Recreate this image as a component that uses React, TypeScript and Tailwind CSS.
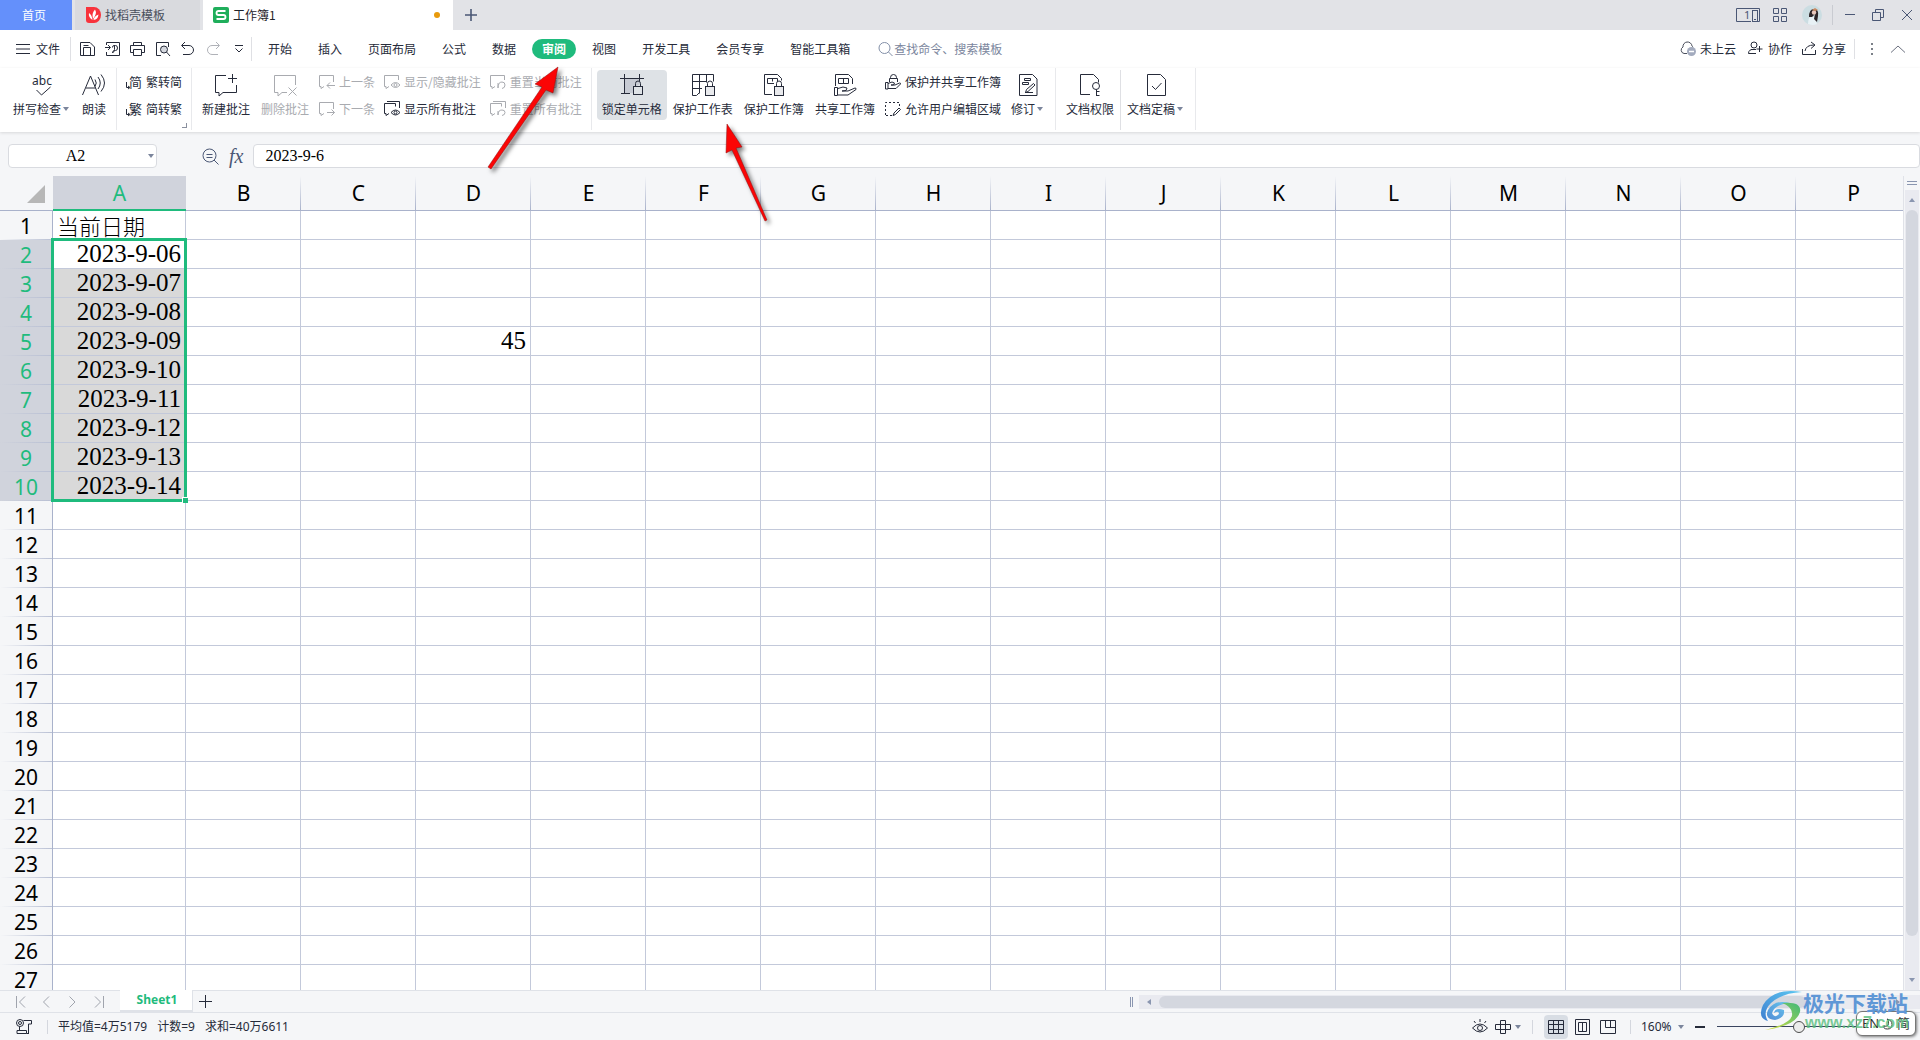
import type { ReactNode } from 'react';

// Small wrapper so that every line icon shares stroke settings
function Icon({ w = 16, h = 16, className = '', children }: { w?: number; h?: number; className?: string; children: ReactNode }) {
  return (
    <svg
      width={w}
      height={h}
      viewBox={`0 0 ${w} ${h}`}
      fill="none"
      stroke="currentColor"
      strokeWidth="1"
      className={`shrink-0 overflow-visible ${className}`}
      aria-hidden="true"
    >
      {children}
    </svg>
  );
}

function Caret() {
  return (
    <svg width="6" height="4" viewBox="0 0 6 4" className="shrink-0 text-[#7b859c]" fill="currentColor" aria-hidden="true">
      <path d="M0 0h6L3 4z" />
    </svg>
  );
}

const icons = {
  spell: (
    <Icon w={24} h={24}>
      <text x="12" y="12" textAnchor="middle" fontSize="12" stroke="none" fill="currentColor" fontFamily="Noto Sans">abc</text>
      <path d="M6.500 17l5 5 9-8" />
    </Icon>
  ),
  read: (
    <Icon w={24} h={24}>
      <path d="M.5 22L8.500 3l8 19M4 15h9.500M13 6.500q2.500 3.500 0 7M16 4q4.500 6 0 12M19 1.500q7 8.500 0 17" />
    </Icon>
  ),
  newNote: (
    <Icon w={24} h={24}>
      <path d="M12 2.500H1.500v17H5v3.500l4-3.500h13.500V12M18.500 1v9M14 5.500h9" />
    </Icon>
  ),
  delNote: (
    <Icon w={24} h={24}>
      <path d="M14 19.500H9L5 23v-3.500H1.500v-17h21V12M15.500 14.500l8 8M23.500 14.500l-8 8" />
    </Icon>
  ),
  lockCell: (
    <Icon w={24} h={24}>
      <path d="M4 6h16v5l-7 4v5H4z" fill="#c7cbd4" stroke="none" />
      <path d="M0 5.500h24M4.500 1v20M19.500 1v7M1 20.500h9" />
      <rect x="13.500" y="13.500" width="9" height="8" fill="#dee2e6" />
      <path d="M15.500 13.500v-3a2.500 2.500 0 015 0v3" />
    </Icon>
  ),
  protectSheet: (
    <Icon w={24} h={24}>
      <path d="M1.500 1.500h21v7M8.500 1.500v19M15.500 1.500v8M1.500 1.500v21h4l3-3M1.500 8.500h14M1.500 15.500H11" />
      <rect x="14.500" y="13.500" width="9" height="9" fill="#e9eaed" />
      <path d="M16.500 13.500v-3a2.500 2.500 0 015 0v3" />
    </Icon>
  ),
  protectBook: (
    <Icon w={24} h={24}>
      <path d="M10 21.500H2.500v-20h13l4 4v2M12 10.500H5.500v-5h10v3M10.500 5.500v3" />
      <rect x="12.500" y="13.500" width="9" height="9" fill="#e9eaed" />
      <path d="M14.500 13.500v-3a2.500 2.500 0 015 0v3" />
    </Icon>
  ),
  shareBook: (
    <Icon w={24} h={24}>
      <path d="M2.500 13V1.500h13l4 4V11M5.500 5.500h10v5h-10zM10.500 5.500v5" />
      <path d="M1.500 14.500h3v8h-3zM5 15.500l5-1.500 4 1-1 2.500-4 .5h6l7-3q1.500 0 1 1.500l-8 5.500H5" />
    </Icon>
  ),
  revise: (
    <Icon w={24} h={24}>
      <path d="M3.500 1.500h13l4.500 4.500v16.500H3.500zM8.500 5.500h6v2h-6zM6.500 9.500h6v2h-6zM9.500 19.500l1-3 7-6 1.500 1.500-7 6.500zM9 19.500h8" />
    </Icon>
  ),
  permission: (
    <Icon w={24} h={24}>
      <path d="M12 21.500H2.500v-20h13l5 5v3" />
      <circle cx="18" cy="13" r="3.500" />
      <path d="M18.500 16.500V23M18.500 18.500h3M18.500 22.500h3" />
    </Icon>
  ),
  finalize: (
    <Icon w={24} h={24}>
      <path d="M3.500 1.500h13l5 5v16h-18zM8 13l3.500 3.500L17.500 10" />
    </Icon>
  ),
  toSimple: (
    <Icon>
      <text x="16" y="13" textAnchor="end" fontSize="13" stroke="none" fill="currentColor" fontFamily="Noto Sans CJK SC">简</text>
      <path d="M.5 8v5.500H3M2 12l2 1.500L2 15" />
    </Icon>
  ),
  toTrad: (
    <Icon>
      <text x="16" y="13" textAnchor="end" fontSize="13" stroke="none" fill="currentColor" fontFamily="Noto Sans CJK SC">繁</text>
      <path d="M.5 8v5.500H3M2 12l2 1.500L2 15" />
    </Icon>
  ),
  prev: (
    <Icon>
      <path d="M5 12.500l-3 2v-2H.500v-11h14V8M16 11.500H8M11 8.500l-3 3 3 3" />
    </Icon>
  ),
  next: (
    <Icon>
      <path d="M5 12.500l-3 2v-2H.500v-11h14V8M8 11.500h7.500M12.500 8.500l3 3-3 3" />
    </Icon>
  ),
  showHide: (
    <Icon>
      <path d="M5 12.500l-3 2v-2H.500v-11h14V6" />
      <path d="M7 11q4.500-5 9 0q-4.500 5-9 0z" />
      <circle cx="11.500" cy="11" r="1.500" />
    </Icon>
  ),
  showAll: (
    <Icon>
      <path d="M5 12.500l-3 2v-2H.500v-10h11v3M3 .5h12.500V7" />
      <path d="M7 11.500q4.500-5 9 0q-4.500 5-9 0z" />
      <circle cx="11.500" cy="11.500" r="1.500" />
    </Icon>
  ),
  resetOne: (
    <Icon>
      <path d="M5 12.500l-3 2v-2H.500v-11h14V6M8 9v5M8 14q0-6 4-6 3 0 3 3t-3 3.500" />
    </Icon>
  ),
  resetAll: (
    <Icon>
      <path d="M5 12.500l-3 2v-2H.500v-10h11v3M3 .5h12.500V7M8 10v4M8 14q0-5 4-5 3 0 3 2.500t-3 3" />
    </Icon>
  ),
  protectShare: (
    <Icon>
      <path d="M5.500 4.500V3.500a3 3 0 016 0v1M4.500 8V4.500h8V8M.5 8.500H3v6.500H.5zM3 9.500l4-1.500 2.500 1-1 2H6h4l4.500-2q1.500 0 1 1L11 14.500H3" />
    </Icon>
  ),
  allowEdit: (
    <Icon>
      <path d="M.5 14V1.500h14V7M1 14.500h7" strokeDasharray="2 2" />
      <path d="M8 14.500l1-2.500 5-5 1.500 1.500-5 5z" />
    </Icon>
  ),
};

const tabs = ['开始', '插入', '页面布局', '公式', '数据', '审阅', '视图', '开发工具', '会员专享', '智能工具箱'];
const columns = ['A', 'B', 'C', 'D', 'E', 'F', 'G', 'H', 'I', 'J', 'K', 'L', 'M', 'N', 'O', 'P'];
const rows = Array.from({ length: 27 }, (_, i) => i + 1);

const cells: Record<string, string> = {
  A1: '当前日期',
  A2: '2023-9-06',
  A3: '2023-9-07',
  A4: '2023-9-08',
  A5: '2023-9-09',
  A6: '2023-9-10',
  A7: '2023-9-11',
  A8: '2023-9-12',
  A9: '2023-9-13',
  A10: '2023-9-14',
  D5: '45',
};

function BigButton({ icon, label, active, disabled, menu }: { icon: ReactNode; label: string; active?: boolean; disabled?: boolean; menu?: boolean }) {
  return (
    <button
      type="button"
      disabled={disabled}
      className={`flex h-[50px] shrink-0 flex-col items-center gap-1 rounded-sm px-[5px] pt-[3px] disabled:text-[#a9abb0] ${active ? 'bg-[#dee2e6]' : ''}`}
    >
      {icon}
      <span className="flex items-center leading-4">
        {label}
        {menu && (
          <span className="flex w-2.5 justify-center">
            <Caret />
          </span>
        )}
      </span>
    </button>
  );
}

function SmallButton({ icon, label, disabled }: { icon: ReactNode; label: string; disabled?: boolean }) {
  return (
    <button type="button" disabled={disabled} className="flex h-6 items-center gap-1 px-1 whitespace-nowrap disabled:text-[#a9abb0]">
      {icon}
      {label}
    </button>
  );
}

function Group({ children, className = '' }: { children: ReactNode; className?: string }) {
  return <div className={`relative flex shrink-0 gap-px border-r border-[#e8e9ec] px-[5px] pt-0.5 ${className}`}>{children}</div>;
}

function Stack({ children }: { children: ReactNode }) {
  return <div className="flex flex-col gap-[3px]">{children}</div>;
}

function TitleBar() {
  return (
    <header className="flex h-[30px] shrink-0 items-stretch bg-[#e2e3e7]">
      <button type="button" className="w-[72px] bg-[#6490fb] pr-1 text-white">首页</button>
      <button type="button" className="ml-[3px] flex w-[125px] items-center gap-1 bg-[#d9dade] pl-[11px] text-[#4a4f5c]">
        <svg width="15" height="16" viewBox="0 0 15 16" aria-hidden="true">
          <path d="M0 0h8a7 8 0 010 16H3a3 3 0 01-3-3z" fill="#f8333c" />
          <path d="M6.500 13Q2 10 3 6q3 2 3.500 7zM7 12Q5.500 6 9 2.500q2.500 4-2 9.500zM7.500 13q.5-4 5-5.500-.5 5-5 5.500z" fill="#fff" />
        </svg>
        找稻壳模板
      </button>
      <button type="button" className="ml-[3px] flex w-[250px] items-center gap-1 bg-white pr-[13px] pl-[10px] text-[#1f2329]">
        <svg width="16" height="16" viewBox="0 0 16 16" aria-hidden="true">
          <rect width="16" height="16" rx="2" fill="#1fae5b" />
          <path d="M12.500 4H5.500q-2 0-2 2t2 2h5q2 0 2 2t-2 2h-7" fill="none" stroke="#fff" strokeWidth="1.800" />
        </svg>
        工作簿1
        <span className="ml-auto size-1.5 rounded-full bg-[#e89a0c]" />
      </button>
      <button type="button" aria-label="新建" className="flex w-9 items-center justify-center text-[#4a5775]">
        <Icon w={12} h={12}><path d="M6 0v12M0 6h12" strokeWidth="1.600" /></Icon>
      </button>
      <div className="ml-auto flex items-center pr-2 text-[#4a5775]">
        <button type="button" aria-label="窗口">
          <Icon w={24} h={14}>
            <path d="M15 13.500H.5V.5h23v13H20" />
            <rect x="16.500" y="2.500" width="5" height="11" />
            <text x="8" y="11" fontSize="11" stroke="none" fill="currentColor" fontFamily="Noto Sans">1</text>
            <path d="M18 11.500h2" />
          </Icon>
        </button>
        <button type="button" aria-label="应用" className="ml-[13px]">
          <Icon w={14} h={14}><path d="M.5.5h5v5h-5zM8.500.5h5v5h-5zM.5 8.500h5v5h-5zM8.500 8.500h5v5h-5z" /></Icon>
        </button>
        <button type="button" aria-label="账号" className="ml-[15px]">
          <svg width="20" height="20" viewBox="0 0 20 20" aria-hidden="true">
            <circle cx="10" cy="10" r="10" fill="#cbdde2" />
            <path d="M6 19q0-6 3-8l4 1 2 7q-4 2-9 0z" fill="#e8f1f5" />
            <path d="M7 12q0-8 5-8 5 0 4 7l-1 6-3-3 1-5-3 3z" fill="#2c2427" />
            <circle cx="12" cy="7.500" r="2.200" fill="#e9c8bd" />
            <path d="M10 5l3-2 3 2-3 1z" fill="#c88a62" />
          </svg>
        </button>
        <span className="ml-2.5 h-5 w-px bg-[#c9cbd1]" />
        <button type="button" aria-label="最小化" className="ml-3">
          <Icon w={10} h={12}><path d="M0 5.500h10" /></Icon>
        </button>
        <button type="button" aria-label="还原" className="ml-[17px]">
          <Icon w={12} h={12}><path d="M.5 3.500h8v8h-8zM3.500 3.500v-3h8v8h-3" /></Icon>
        </button>
        <button type="button" aria-label="关闭" className="ml-[18px]">
          <Icon w={10} h={10}><path d="M0 0l10 10M10 0L0 10" /></Icon>
        </button>
      </div>
    </header>
  );
}

function MenuBar() {
  return (
    <div className="flex h-[38px] shrink-0 items-center bg-white">
      <button type="button" className="ml-4 flex items-center gap-1.5">
        <Icon w={14} h={10}><path d="M0 .5h14M0 5h14M0 9.500h14" /></Icon>
        文件
      </button>
      <span className="ml-2.5 h-6 w-px bg-[#dfe0e4]" />
      <div className="ml-[9px] flex items-center gap-[9px]">
        <button type="button" aria-label="保存">
          <Icon><path d="M.5 1.500h9.500l4.500 4.500V14.500H.500zM3.500 14V6.500h7V14M3.500 4.500h5" /></Icon>
        </button>
        <button type="button" aria-label="输出为PDF">
          <Icon><path d="M1.500 4V1.500h13v13h-13V11M0 6.500h5M3 4l2.500 2.500L3 9M7.500 12q0-2.500 2-2.500h1q2 0 2-2.500t-2-2.500H9q-1.500 0-1.500 2M9.500 4.500v4q0 3-2 3" /></Icon>
        </button>
        <button type="button" aria-label="打印">
          <Icon><path d="M3.500 4.500v-3h8v3M3 11.500H.5v-7h14v7H12M3.500 8.500h8v6h-8z" /></Icon>
        </button>
        <button type="button" aria-label="打印预览">
          <Icon>
            <path d="M6 14.500H1.500v-13h12V6" />
            <circle cx="9" cy="8.500" r="3.500" fill="#d5d8df" />
            <path d="M11.500 11l3.500 4" />
          </Icon>
        </button>
        <button type="button" aria-label="撤销">
          <Icon><path d="M5 1L1.500 4.500 5 8M2 4.500h7a4.500 4.500 0 010 9H3" /></Icon>
        </button>
        <button type="button" aria-label="恢复" disabled className="text-[#b0b2b8]">
          <Icon><path d="M11 1l3.500 3.500L11 8M14 4.500H7a4.500 4.500 0 000 9h6" /></Icon>
        </button>
        <button type="button" aria-label="更多" className="ml-1">
          <Icon w={10} h={8}><path d="M1 .5h8M1.500 3.500L5 7l3.500-3.500" /></Icon>
        </button>
      </div>
      <span className="ml-[7px] h-6 w-px bg-[#dfe0e4]" />
      <nav className="ml-1.5 flex items-center gap-1.5">
        {tabs.map(tab => (
          <button
            key={tab}
            type="button"
            className={`h-5 rounded-full px-2.5 whitespace-nowrap ${tab === '审阅' ? 'bg-[#1fbb7d] font-bold text-white' : ''}`}
          >
            {tab}
          </button>
        ))}
      </nav>
      <label className="ml-[18px] flex items-center text-[#8390a8]">
        <Icon><circle cx="6.500" cy="7" r="5.500" /><path d="M10.500 11l4 4" /></Icon>
        <input aria-label="搜索" placeholder="查找命令、搜索模板" className="w-32 placeholder:text-[#7b869d] outline-none" />
      </label>
      <div className="ml-auto flex items-center pr-[15px]">
        <button type="button" className="flex items-center gap-1">
          <Icon>
            <path d="M7 12.500H4A3.500 3.500 0 013 6a4.500 4.500 0 019-1 3 3 0 011 1.500" stroke="#4a4f5c" />
            <circle cx="11.500" cy="10.500" r="4.500" fill="#a3abbe" stroke="none" />
            <path d="M9 10.500h5" stroke="#fff" strokeWidth="1.500" />
          </Icon>
          未上云
        </button>
        <button type="button" className="ml-3 flex items-center gap-1">
          <Icon><circle cx="6" cy="4" r="3" /><path d="M8 12.500H.5Q.5 8 6 8.500M3 8.500h5M11.500 5v6M8.500 8h6" /></Icon>
          协作
        </button>
        <button type="button" className="ml-[10px] flex items-center gap-1">
          <Icon><path d="M.5 8v5.500h13V9M3 10q1-6 9-6M9 1l4 3-4 3.500" /></Icon>
          分享
        </button>
        <span className="ml-2 h-5 w-px bg-[#dfe0e4]" />
        <button type="button" aria-label="更多选项" className="ml-4">
          <svg width="3" height="12" viewBox="0 0 3 12" fill="#7b8088" aria-hidden="true"><path d="M0 0h2v2H0zM0 5h2v2H0zM0 10h2v2H0z" /></svg>
        </button>
        <button type="button" aria-label="折叠功能区" className="ml-[17px] text-[#6c7180]">
          <Icon w={14} h={8}><path d="M0 7.500L7 1l7 6.500" /></Icon>
        </button>
      </div>
    </div>
  );
}

function Ribbon() {
  return (
    <div className="relative z-10 flex h-16 shrink-0 bg-white pb-0.5 shadow-[0_1px_3px_rgba(0,0,0,0.12)]">
      <Group className="pl-2">
        <BigButton icon={icons.spell} label="拼写检查" menu />
        <BigButton icon={icons.read} label="朗读" />
      </Group>
      <Group>
        <Stack>
          <SmallButton icon={icons.toSimple} label="繁转简" />
          <SmallButton icon={icons.toTrad} label="简转繁" />
        </Stack>
        <span className="absolute right-1 bottom-0.5 size-[5px] border-r border-b border-[#8a909e]" />
      </Group>
      <Group>
        <BigButton icon={icons.newNote} label="新建批注" />
        <BigButton icon={icons.delNote} label="删除批注" disabled />
        <Stack>
          <SmallButton icon={icons.prev} label="上一条" disabled />
          <SmallButton icon={icons.next} label="下一条" disabled />
        </Stack>
        <Stack>
          <SmallButton icon={icons.showHide} label="显示/隐藏批注" disabled />
          <SmallButton icon={icons.showAll} label="显示所有批注" />
        </Stack>
        <Stack>
          <SmallButton icon={icons.resetOne} label="重置当前批注" disabled />
          <SmallButton icon={icons.resetAll} label="重置所有批注" disabled />
        </Stack>
      </Group>
      <Group>
        <BigButton icon={icons.lockCell} label="锁定单元格" active />
        <BigButton icon={icons.protectSheet} label="保护工作表" />
        <BigButton icon={icons.protectBook} label="保护工作簿" />
        <BigButton icon={icons.shareBook} label="共享工作簿" />
        <Stack>
          <SmallButton icon={icons.protectShare} label="保护并共享工作簿" />
          <SmallButton icon={icons.allowEdit} label="允许用户编辑区域" />
        </Stack>
        <BigButton icon={icons.revise} label="修订" menu />
      </Group>
      <Group>
        <BigButton icon={icons.permission} label="文档权限" />
        <span className="w-px bg-[#dfe0e4]" />
        <BigButton icon={icons.finalize} label="文档定稿" menu />
      </Group>
    </div>
  );
}

function FormulaBar() {
  return (
    <div className="flex h-11 shrink-0 items-center bg-[#f5f6f8] pt-1 pl-2">
      <div className="flex h-6 w-[149px] items-center rounded-sm border border-[#d9dbe0] bg-white pr-0.5">
        <input aria-label="名称框" defaultValue="A2" className="min-w-0 flex-1 pr-1.5 text-center font-['Liberation_Serif',serif] text-base leading-5 text-black outline-none" />
        <Caret />
      </div>
      <div className="ml-[45px] flex items-center gap-2.5 text-[#4a5775]">
        <button type="button" aria-label="查找">
          <Icon w={17} h={17}><circle cx="7.500" cy="7.500" r="6.500" /><path d="M12 12l4.500 4.500M4.500 6.500h6M4.500 9.500h6" /></Icon>
        </button>
        <button type="button" className="font-['Liberation_Serif',serif] text-xl leading-5 italic">fx</button>
      </div>
      <input
        aria-label="编辑栏"
        defaultValue="2023-9-6"
        className="ml-2.5 h-6 min-w-0 flex-1 rounded-sm border border-[#d9dbe0] bg-white px-[11px] font-['Liberation_Serif',serif] text-base leading-5 text-black outline-none"
      />
    </div>
  );
}

function Sheet() {
  return (
    <div className="flex min-h-0 flex-1 bg-[#f5f6f8]">
      <div className="min-w-0 flex-1 overflow-hidden border-r border-[#e0e2e8]">
        <table className="w-full table-fixed border-separate border-spacing-0 bg-white">
          <colgroup>
            <col className="w-[53px]" />
            {columns.map(c => (
              <col key={c} className={c === 'A' ? 'w-[133px]' : 'w-[115px]'} />
            ))}
          </colgroup>
          <thead>
            <tr className="h-[35px]">
              <th className="border-b border-[#a9b2cb] bg-[#f5f6f8] p-0">
                <svg width="18" height="18" viewBox="0 0 18 18" className="mt-px ml-[27px]" aria-hidden="true"><path d="M18 0v18H0z" fill="#b7b7b7" /></svg>
              </th>
              {columns.map(c => (
                <th
                  key={c}
                  scope="col"
                  className={`p-0 font-['Noto_Sans',sans-serif] text-[21px] leading-8 font-normal ${
                    c === 'A'
                      ? 'border-b-2 border-[#1fbb7d] bg-[#d0d3dc] text-[#1fbb7d]'
                      : 'border-b border-[#a9b2cb] bg-[#f5f6f8] bg-linear-to-b from-transparent to-[#a9b2cb] bg-[length:1px_100%] bg-right bg-no-repeat text-black'
                  }`}
                >
                  {c}
                </th>
              ))}
            </tr>
          </thead>
          <tbody>
            {rows.map(r => {
              const selectedRow = r >= 2 && r <= 10;
              return (
                <tr key={r} className="h-[29px]">
                  <th
                    scope="row"
                    className={`border-r border-[#a9b2cb] bg-linear-to-r from-transparent to-[#b9c0d4] bg-[length:100%_1px] bg-bottom bg-no-repeat p-0 font-['Noto_Sans',sans-serif] text-[21px] leading-7 font-normal ${
                      selectedRow ? 'bg-[#d0d3dc] text-[#1fbb7d]' : 'bg-[#f5f6f8] text-black'
                    }`}
                  >
                    {r}
                  </th>
                  {columns.map(c => {
                    const id = `${c}${r}`;
                    const shaded = c === 'A' && r > 2 && r <= 10;
                    return (
                      <td
                        key={id}
                        className={`relative border-r border-b border-[#c3c9da] px-1 py-0 whitespace-nowrap text-black ${shaded ? 'bg-[#d9d9d9]' : ''} ${
                          id === 'A1'
                            ? "text-left font-['Noto_Sans_CJK_SC',sans-serif] text-[22px] leading-7 font-light"
                            : "text-right font-['Liberation_Serif',serif] text-[25px] leading-7"
                        }`}
                      >
                        {cells[id]}
                        {id === 'A2' && (
                          <span className="pointer-events-none absolute -top-0.5 -left-0.5 z-10 h-[264px] w-[136px] border-3 border-[#1fbb7d]">
                            <span className="absolute -right-1 -bottom-1 size-1.5 border-t border-l border-white bg-[#1fbb7d]" />
                          </span>
                        )}
                      </td>
                    );
                  })}
                </tr>
              );
            })}
          </tbody>
        </table>
      </div>
      <div className="flex w-4 flex-col items-center text-[#8a96b0]">
        <div className="my-[5px] h-1 w-2.5 border-y border-current" />
        <div className="flex min-h-0 w-3.5 flex-1 flex-col items-center bg-[#e9eaf0]">
          <svg width="6" height="4" viewBox="0 0 6 4" className="my-2 shrink-0" fill="currentColor" aria-hidden="true"><path d="M3 0l3 4H0z" /></svg>
          <div className="mb-[42px] w-3 flex-1 rounded-full bg-[#d4d7df]" />
          <svg width="6" height="4" viewBox="0 0 6 4" className="mb-2 shrink-0" fill="currentColor" aria-hidden="true"><path d="M0 0h6L3 4z" /></svg>
        </div>
      </div>
    </div>
  );
}

function SheetTabs() {
  return (
    <div className="flex h-[22px] shrink-0 items-stretch border-t border-[#dfe2e8] bg-[#f5f6f8]">
      <div className="flex w-[120px] items-center gap-4 pl-4 text-[#a0a4ad]">
        <button type="button" aria-label="第一张"><Icon w={10} h={12}><path d="M.5 0v12M9 .5L3.500 6 9 11.500" /></Icon></button>
        <button type="button" aria-label="上一张"><Icon w={10} h={12}><path d="M7 .5L1.500 6 7 11.500" /></Icon></button>
        <button type="button" aria-label="下一张"><Icon w={10} h={12}><path d="M1.500.5L7 6l-5.500 5.500" /></Icon></button>
        <button type="button" aria-label="最后一张"><Icon w={10} h={12}><path d="M1 .5L6.500 6 1 11.500M9.500 0v12" /></Icon></button>
      </div>
      <button type="button" className="-mt-px w-[73px] border-r border-b-2 border-[#dfe2e8] bg-white pl-0.5 font-['Noto_Sans',sans-serif] font-bold text-[#1fbb7d]">Sheet1</button>
      <button type="button" aria-label="新建工作表" className="flex w-6 items-center justify-center"><Icon w={13} h={13}><path d="M6.500 0v13M0 6.500h13" /></Icon></button>
      <div className="ml-auto flex w-[41%] items-center text-[#8a96b0]">
        <div className="ml-[-3px] h-2.5 w-[3px] border-x border-current" />
        <div className="ml-1.5 flex h-3.5 flex-1 items-center bg-[#e9eaf0] pr-5 pl-2">
          <svg width="4" height="6" viewBox="0 0 4 6" className="shrink-0" fill="currentColor" aria-hidden="true"><path d="M4 0v6L0 3z" /></svg>
          <div className="mr-[90px] ml-2 h-3 flex-1 rounded-full bg-[#d4d7df]" />
          <svg width="4" height="6" viewBox="0 0 4 6" className="shrink-0" fill="currentColor" aria-hidden="true"><path d="M0 0v6l4-3z" /></svg>
        </div>
      </div>
    </div>
  );
}

function StatusBar() {
  return (
    <footer className="flex h-7 shrink-0 items-center border-t border-[#dfe2e8] bg-[#f5f6f8] font-['Noto_Sans','Noto_Sans_CJK_SC',sans-serif]">
      <button type="button" aria-label="宏" className="ml-4">
        <Icon><circle cx="4" cy="4" r="3.500" /><circle cx="4" cy="4" r="1.500" /><path d="M7.500 1.500h8V5h-3v10M3.500 7.500v4M1 11.500h9.500v3H1zM10.500 14.500h2" /></Icon>
      </button>
      <span className="ml-[15px] h-3.5 w-px bg-[#d4d7de]" />
      <div className="ml-2.5 flex gap-2.5">
        <span>平均值=4万5179</span>
        <span>计数=9</span>
        <span>求和=40万6611</span>
      </div>
      <div className="ml-auto flex items-center">
        <button type="button" aria-label="护眼模式">
          <Icon>
            <path d="M.5 9q7.500-8 15 0-7.500 8-15 0z" />
            <circle cx="8" cy="9" r="2.500" />
            <path d="M8 0v3M2 2l1.500 2M14 2l-1.500 2" />
          </Icon>
        </button>
        <button type="button" aria-label="阅读模式" className="ml-[7px] flex items-center gap-1">
          <Icon><path d="M5.500 1.500h5v13h-5zM.5 5.500h15v5H.5zM5.500 5.500v5M10.500 5.500v5" /></Icon>
          <Caret />
        </button>
        <span className="mx-[11px] h-3.5 w-px bg-[#d4d7de]" />
        <div className="flex items-center gap-[7px]">
          <button type="button" aria-label="普通视图" className="flex h-6 w-6 items-center justify-center rounded-sm bg-[#d8dde4]">
            <Icon><path d="M.5 1.500h15v13H.5zM.5 5.500h15M.5 10.500h15M5.500 1.500v13M10.500 1.500v13" /></Icon>
          </button>
          <button type="button" aria-label="页面布局视图">
            <Icon><path d="M.5.5h14v15H.5zM3.500 3.500h8v9h-8zM7.500 3.500v9" /></Icon>
          </button>
          <button type="button" aria-label="分页预览" className="ml-0.5">
            <Icon><path d="M.5 1.500h15v13H.5zM5.500 1.500v7h10M10.500 1.500v7" /></Icon>
          </button>
        </div>
        <span className="ml-3.5 h-3.5 w-px bg-[#d4d7de]" />
        <label className="ml-2.5 flex items-center">
          <select aria-label="缩放比例" className="w-[37px] appearance-none bg-transparent outline-none">
            <option>160%</option>
          </select>
          <Caret />
        </label>
        <button type="button" aria-label="缩小" className="ml-[11px]"><Icon w={10} h={10}><path d="M0 5h10" strokeWidth="2" /></Icon></button>
        <input
          type="range"
          aria-label="缩放"
          min="0"
          max="100"
          defaultValue="50"
          className="ml-3 h-3 w-[164px] appearance-none bg-[linear-gradient(#3a4560,#3a4560)] bg-[length:100%_1px] bg-center bg-no-repeat [&::-webkit-slider-thumb]:size-3 [&::-webkit-slider-thumb]:appearance-none [&::-webkit-slider-thumb]:rounded-full [&::-webkit-slider-thumb]:border [&::-webkit-slider-thumb]:border-[#4d4d4d] [&::-webkit-slider-thumb]:bg-[#ececec]"
        />
        <div className="w-[39px]" />
      </div>
    </footer>
  );
}

// Red pointers lie over the ribbon
function Arrows() {
  return (
    <svg width="300" height="180" viewBox="480 60 300 180" className="pointer-events-none absolute top-[60px] left-[480px] z-20 drop-shadow-[3px_3px_2px_rgba(0,0,0,0.5)]" aria-hidden="true">
      <g fill="#fb0505" stroke="#8f1010" strokeWidth="0.500">
        <path d="M558 67L553 93L546 90L491 169L488 167L542 87L535 84Z" />
        <path d="M727 124L742 147L736 148L767 220L765 221L732 150L726 153Z" />
      </g>
    </svg>
  );
}

function Watermark() {
  return (
    <div className="pointer-events-none absolute right-0 bottom-0 z-30 h-[52px] w-40">
      <div className="absolute right-1 bottom-1 flex h-[25px] w-[60px] items-center justify-center gap-1 rounded-md border border-[#777] bg-white font-['Noto_Sans','Noto_Sans_CJK_SC',sans-serif] text-[13px] text-[#333] shadow-[1px_1px_3px_rgba(0,0,0,0.5)]">
        <span>EN</span>
        <Icon w={10} h={12}><path d="M4 1q5 1 5 5.500T4.500 11 1 8q4 1 4.500-2.500T4 1z" /></Icon>
        <span>简</span>
      </div>
      <svg width="42" height="42" viewBox="0 0 42 42" className="absolute top-0.5 left-0" aria-hidden="true">
        <defs>
          <linearGradient id="wm-blue" x1="0" y1="1" x2="1" y2="0">
            <stop offset="0" stopColor="#3f7fd0" />
            <stop offset="1" stopColor="#5cc8f2" />
          </linearGradient>
          <linearGradient id="wm-green" x1="0" y1="1" x2="1" y2="0">
            <stop offset="0" stopColor="#d8e040" />
            <stop offset="1" stopColor="#41b878" />
          </linearGradient>
        </defs>
        <path d="M42 2Q14-3 3 15Q-3 28 8 31Q2 22 11 13Q22 3 42 2z" fill="url(#wm-blue)" />
        <path d="M30 13Q15 9 8 20Q4 29 15 30Q25 28 24 20Q15 17 14 23Q19 20 19 24Q14 29 12 23Q15 14 30 13z" fill="url(#wm-blue)" opacity="0.900" />
        <path d="M22 13Q42 11 40 22Q36 36 5 40Q34 33 32 23Q31 16 22 13z" fill="url(#wm-green)" />
      </svg>
      <div className="absolute top-1 left-[43px] font-['Noto_Sans_CJK_SC',sans-serif] text-[21px] leading-5 font-bold whitespace-nowrap text-[#5f97d6]">极光下载站</div>
      <div className="absolute top-[25px] left-[45px] font-['Liberation_Sans',sans-serif] text-base leading-5 font-bold whitespace-nowrap text-[#57bd7c]/80">www.xz7.com</div>
    </div>
  );
}

export default function App() {
  return (
    <div className="relative flex h-screen flex-col overflow-hidden bg-[#f5f6f8] font-['Noto_Sans_CJK_SC',sans-serif] text-xs text-[#262b3a]">
      <TitleBar />
      <MenuBar />
      <Ribbon />
      <FormulaBar />
      <Sheet />
      <SheetTabs />
      <StatusBar />
      <Arrows />
      <Watermark />
    </div>
  );
}
